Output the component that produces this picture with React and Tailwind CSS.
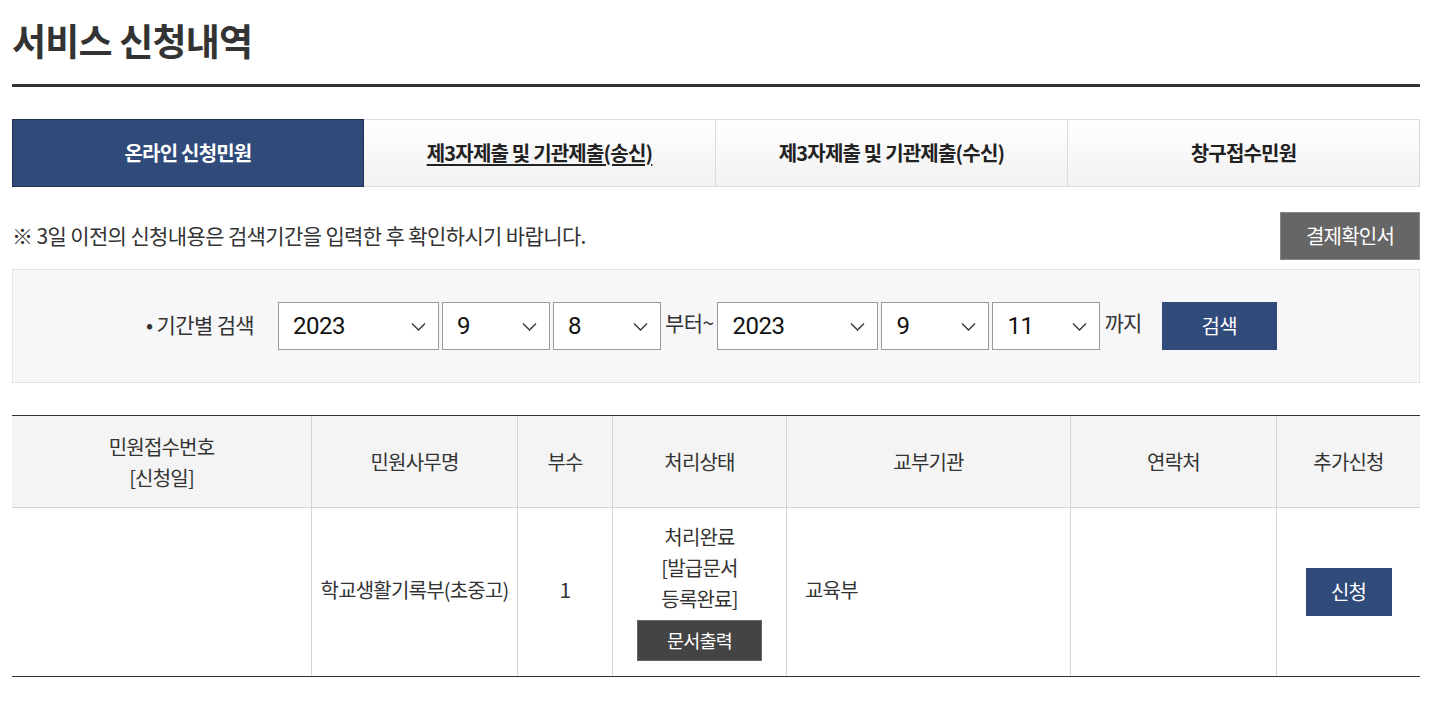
import React from 'react';

const FONT = { fontFamily: '"Noto Sans CJK KR", "Noto Sans", sans-serif' };

const tabs = [
  { label: '온라인 신청민원', active: true },
  { label: '제3자제출 및 기관제출(송신)', underline: true },
  { label: '제3자제출 및 기관제출(수신)' },
  { label: '창구접수민원' },
];

const Chevron = () => (
  <svg width="15" height="9" viewBox="0 0 15 9" fill="none" stroke="#333" strokeWidth="1.3">
    <path d="M1 1.5l6.5 6.5 6.5-6.5" />
  </svg>
);

const Select = ({ value, width }) => (
  <div
    className={`flex items-center justify-between h-12 bg-white border border-[#9a9a9a] pl-[14px] pr-[12px] ${width}`}
  >
    <span className="text-[24px] text-[#111]" style={{ fontFamily: 'Roboto, "Liberation Sans", Arial, sans-serif', letterSpacing: '-0.02em' }}>{value}</span>
    <Chevron />
  </div>
);

const HeaderCell = ({ children, w, last }) => (
  <div className={`${w} flex items-center justify-center text-center text-[20px] leading-[31px] text-[#333] ${last ? '' : 'border-r border-[#d5d5d5]'}`}>
    {children}
  </div>
);

export default function App() {
  return (
    <div className="bg-white w-[1450px] h-[708px] pl-3 pr-[30px] pt-[14px] tracking-[-0.05em]" style={FONT}>
      <h1 className="text-[37px] font-bold text-[#333] leading-[52px] pb-[18px] border-b-[3px] border-[#333]">서비스 신청내역</h1>

      <div className="mt-[32px] grid grid-cols-4 h-[68px]">
        {tabs.map((t, i) =>
          t.active ? (
            <div key={i} className="flex items-center justify-center bg-[#304a7a] border border-[#1f3050] text-white text-[20px] font-bold">
              {t.label}
            </div>
          ) : (
            <div
              key={i}
              className="flex items-center justify-center border border-l-0 border-[#dcdcdc] bg-gradient-to-b from-white to-[#f1f1f1] text-[#222] text-[20px] font-bold"
            >
              <span className={t.underline ? 'underline underline-offset-[3px]' : ''}>{t.label}</span>
            </div>
          )
        )}
      </div>

      <div className="mt-[25px] flex items-center justify-between h-[48px]">
        <p className="text-[21px] text-[#333] tracking-[-0.03em]">※ 3일 이전의 신청내용은 검색기간을 입력한 후 확인하시기 바랍니다.</p>
        <button className="w-[140px] h-[48px] bg-[#666] border border-[#888] text-white text-[20px]">결제확인서</button>
      </div>

      <div className="mt-[9px] h-[114px] bg-[#f7f7f9] border border-[#e4e4e8] flex items-center pl-[133px] tracking-[-0.04em]">
        <span className="text-[21px] text-[#333] mr-[24px] -mt-[3px]">• 기간별 검색</span>
        <div className="flex items-center gap-[3px]">
          <Select value="2023" width="w-[161px]" />
          <Select value="9" width="w-[108px]" />
          <Select value="8" width="w-[108px]" />
          <span className="text-[21px] text-[#333] -mt-[6px] mx-[1px]">부터~</span>
          <Select value="2023" width="w-[161px]" />
          <Select value="9" width="w-[108px]" />
          <Select value="11" width="w-[108px]" />
          <span className="text-[21px] text-[#333] -mt-[6px] ml-[1px]">까지</span>
        </div>
        <button className="ml-[20px] w-[115px] h-[48px] bg-[#304a7a] text-white text-[20px]">검색</button>
      </div>

      <div className="mt-[32px] border-t border-b border-[#333]">
        <div className="flex h-[92px] bg-[#f4f4f4] border-b border-[#d5d5d5]">
          <HeaderCell w="w-[300px]">민원접수번호<br />[신청일]</HeaderCell>
          <HeaderCell w="w-[206px]">민원사무명</HeaderCell>
          <HeaderCell w="w-[95px]">부수</HeaderCell>
          <HeaderCell w="w-[174px]">처리상태</HeaderCell>
          <HeaderCell w="w-[284px]">교부기관</HeaderCell>
          <HeaderCell w="w-[206px]">연락처</HeaderCell>
          <HeaderCell w="flex-1" last>추가신청</HeaderCell>
        </div>
        <div className="flex h-[168px] text-[20px] text-[#333]">
          <div className="w-[300px] border-r border-[#d5d5d5]" />
          <div className="w-[206px] border-r border-[#d5d5d5] flex items-center justify-center -mt-[4px]">학교생활기록부(초중고)</div>
          <div className="w-[95px] border-r border-[#d5d5d5] flex items-center justify-center text-[21px] -mt-[4px]">1</div>
          <div className="w-[174px] border-r border-[#d5d5d5] flex flex-col items-center justify-center leading-[31px] -mt-[2px]">
            <span>처리완료</span>
            <span>[발급문서</span>
            <span>등록완료]</span>
            <button className="mt-[6px] w-[125px] h-[41px] bg-[#444] border border-[#666] text-white text-[18.5px]">문서출력</button>
          </div>
          <div className="w-[284px] border-r border-[#d5d5d5] flex items-center pl-[18px] -mt-[4px]">교육부</div>
          <div className="w-[206px] border-r border-[#d5d5d5]" />
          <div className="flex-1 flex items-center justify-center">
            <button className="w-[86px] h-[48px] bg-[#304a7a] text-white text-[20px]">신청</button>
          </div>
        </div>
      </div>
    </div>
  );
}
